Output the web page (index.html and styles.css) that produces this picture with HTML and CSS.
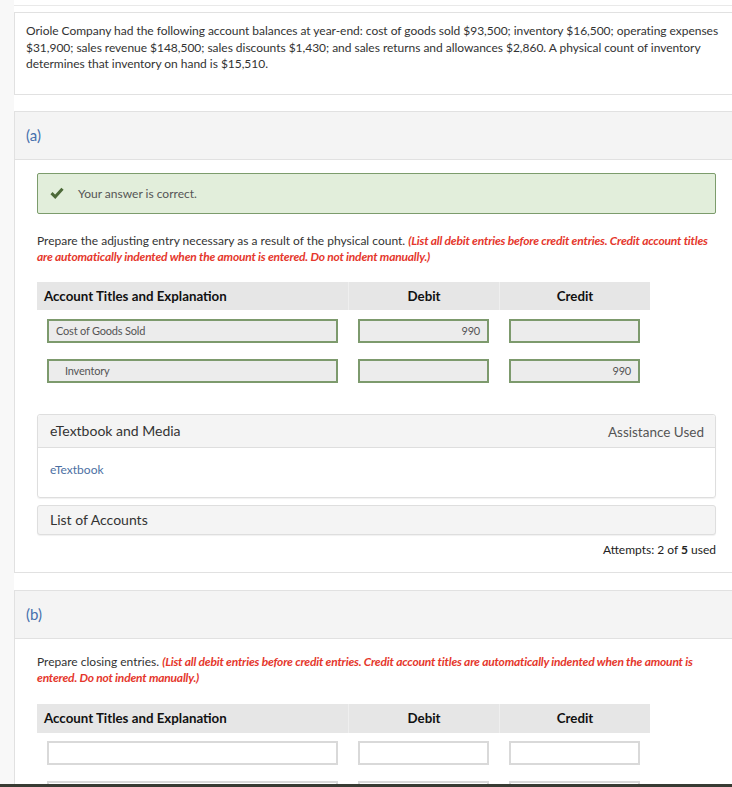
FILE: index.html
```html
<!DOCTYPE html>
<html lang="en">
<head>
<meta charset="utf-8">
<title>Oriole Company</title>
<link rel="stylesheet" href="styles.css">
</head>
<body>
<div class="page">
  <div class="prev"></div>

  <section class="card intro">
    <p>Oriole Company had the following account balances at year-end: cost of goods sold $93,500; inventory $16,500; operating expenses $31,900; sales revenue $148,500; sales discounts $1,430; and sales returns and allowances $2,860. A physical count of inventory determines that inventory on hand is $15,510.</p>
  </section>

  <section class="card part">
    <header class="part-head">(a)</header>
    <div class="part-body">
      <div class="correct">
        <svg class="check" width="14" height="12" viewBox="0 0 14 12"><path d="M1.5 6.2 L5.2 9.8 L12.5 1.8" fill="none" stroke="#4d6a39" stroke-width="3" stroke-linejoin="miter"/></svg>
        <span>Your answer is correct.</span>
      </div>
      <p class="instr">Prepare the adjusting entry necessary as a result of the physical count. <em>(List all debit entries before credit entries. Credit account titles are automatically indented when the amount is entered. Do not indent manually.)</em></p>

      <div class="journal">
        <div class="jhead">
          <div class="hc hc-acct">Account Titles and Explanation</div>
          <div class="hc">Debit</div>
          <div class="hc">Credit</div>
        </div>
        <div class="jrow">
          <div class="cell"><div class="field done">Cost of Goods Sold</div></div>
          <div class="cell"><div class="field done num">990</div></div>
          <div class="cell"><div class="field done num"></div></div>
        </div>
        <div class="jrow">
          <div class="cell"><div class="field done indent">Inventory</div></div>
          <div class="cell"><div class="field done num"></div></div>
          <div class="cell"><div class="field done num">990</div></div>
        </div>
      </div>

      <div class="media">
        <div class="media-head"><span class="media-title">eTextbook and Media</span><span class="assist">Assistance Used</span></div>
        <div class="media-body"><span class="link">eTextbook</span></div>
      </div>
      <div class="accounts">List of Accounts</div>
      <div class="attempts">Attempts: 2 of <b>5</b> used</div>
    </div>
  </section>

  <section class="card part">
    <header class="part-head">(b)</header>
    <div class="part-body part-body-b">
      <p class="instr">Prepare closing entries. <em>(List all debit entries before credit entries. Credit account titles are automatically indented when the amount is entered. Do not indent manually.)</em></p>
      <div class="journal journal-b">
        <div class="jhead">
          <div class="hc hc-acct">Account Titles and Explanation</div>
          <div class="hc">Debit</div>
          <div class="hc">Credit</div>
        </div>
        <div class="jrow">
          <div class="cell"><div class="field"></div></div>
          <div class="cell"><div class="field"></div></div>
          <div class="cell"><div class="field"></div></div>
        </div>
        <div class="jrow">
          <div class="cell"><div class="field"></div></div>
          <div class="cell"><div class="field"></div></div>
          <div class="cell"><div class="field"></div></div>
        </div>
      </div>
    </div>
  </section>
</div>
<div class="taskbar"></div>
</body>
</html>
```
FILE: styles.css
```css
html, body {
  margin: 0;
  padding: 0;
}
body {
  background: #f8f8f8;
  font-family: Lato, "Open Sans", sans-serif;
  color: #333;
  overflow: hidden;
  height: 787px;
}
.page {
  margin-left: 14px;
  width: 725px;
  background: #fff;
  min-height: 787px;
}
.prev {
  height: 5px;
  border-bottom: 1px solid #e9e9e9;
}
.card {
  border: 1px solid #e1e1e1;
  background: #fff;
}
.intro {
  margin-top: 6px;
  padding: 10px 11px 21px;
}
.intro p {
  margin: 0;
  font-size: 12px;
  line-height: 16.5px;
  color: #333;
  letter-spacing: -0.03px;
}
.part {
  margin-top: 16px;
}
.part + .part {
  margin-top: 17px;
}
.part-head {
  height: 47px;
  background: #f4f4f4;
  border-bottom: 1px solid #e1e1e1;
  display: flex;
  align-items: center;
  padding-left: 11px;
  font-size: 15px;
  color: #4670ac;
}
.part-body {
  padding: 13px 22px 14px;
}
.part-body-b {
  padding-bottom: 10px;
}
.correct {
  height: 39px;
  background: #e2eedb;
  border: 1px solid #7c9c6c;
  border-radius: 2px;
  display: flex;
  align-items: center;
  padding-left: 12px;
  font-size: 12px;
  color: #555;
}
.check {
  margin-right: 14px;
}
.instr {
  margin: 19px 0 0;
  font-size: 12px;
  line-height: 16px;
  color: #333;
}
.part-body-b .instr {
  margin-top: 2px;
}
.instr em {
  color: #e5372c;
  font-weight: 700;
  font-style: italic;
  letter-spacing: -0.2px;
}
.journal {
  margin-top: 17px;
  width: 613px;
}
.journal-b {
  margin-top: 18px;
}
.jhead {
  display: grid;
  grid-template-columns: 311px 151px 151px;
  height: 28px;
  background: #e6e6e6;
}
.journal-b .jhead {
  height: 29px;
}
.hc {
  display: flex;
  align-items: center;
  justify-content: center;
  font-size: 13.3px;
  font-weight: 700;
  color: #111;
  border-left: 1px solid #efefef;
}
.hc-acct {
  justify-content: flex-start;
  padding-left: 7px;
  border-left: none;
}
.jrow {
  display: grid;
  grid-template-columns: 311px 151px 151px;
  margin-top: 16px;
}
.jhead + .jrow {
  margin-top: 9px;
}
.journal-b .jhead + .jrow {
  margin-top: 8px;
}
.cell {
  padding: 0 10px;
}
.field {
  height: 24px;
  box-sizing: border-box;
  border: 2px solid #d9d9d9;
  background: #fff;
  display: flex;
  align-items: center;
  padding-left: 7px;
  font-size: 11px;
  color: #555;
  letter-spacing: -0.2px;
}
.field.done {
  border-color: #7d9a6d;
  background: #ececec;
}
.field.indent {
  padding-left: 16px;
}
.field.num {
  justify-content: flex-end;
  padding-right: 7px;
}
.media {
  margin-top: 31px;
  border: 1px solid #dedede;
  border-radius: 3px;
  box-shadow: 0 1px 1px rgba(0,0,0,0.06);
}
.media-head {
  height: 33px;
  box-sizing: border-box;
  background: #f4f4f4;
  border-bottom: 1px solid #dedede;
  display: flex;
  align-items: center;
  justify-content: space-between;
  padding: 0 11px 0 12px;
  border-radius: 3px 3px 0 0;
}
.media-title {
  font-size: 14px;
  color: #333;
}
.assist {
  font-size: 13.5px;
  color: #555;
  margin-top: 3px;
}
.media-body {
  height: 49px;
  box-sizing: border-box;
  padding: 10px 12px 0;
}
.link {
  font-size: 12px;
  color: #4c6fa3;
}
.accounts {
  margin-top: 7px;
  height: 30px;
  box-sizing: border-box;
  border: 1px solid #dedede;
  border-radius: 3px;
  background: #f4f4f4;
  display: flex;
  align-items: center;
  padding-left: 12px;
  font-size: 14px;
  color: #333;
  box-shadow: 0 1px 1px rgba(0,0,0,0.06);
}
.attempts {
  margin-top: 7px;
  text-align: right;
  font-size: 12px;
  line-height: 16px;
  color: #222;
}
.attempts b {
  font-weight: 700;
}
.taskbar {
  position: fixed;
  left: 0;
  right: 0;
  bottom: 0;
  height: 3px;
  background: #383b33;
}
```
